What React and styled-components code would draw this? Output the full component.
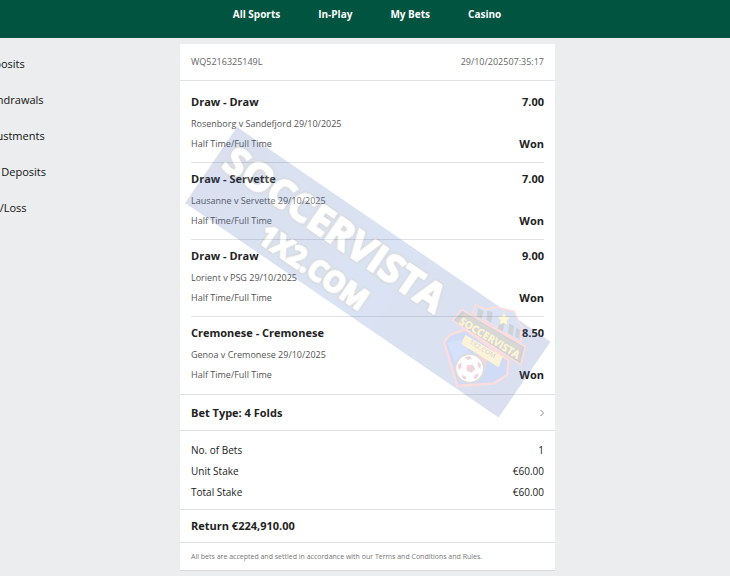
import React from 'react'
import styled, { createGlobalStyle } from 'styled-components'

const navLinks = ['All Sports', 'In-Play', 'My Bets', 'Casino']

const accountLinks = ['Deposits', 'Withdrawals', 'Adjustments', 'Net Deposits', 'Win/Loss']

const legs = [
  { id: 1, pick: 'Draw - Draw', odds: '7.00', fixture: 'Rosenborg v Sandefjord 29/10/2025' },
  { id: 2, pick: 'Draw - Servette', odds: '7.00', fixture: 'Lausanne v Servette 29/10/2025' },
  { id: 3, pick: 'Draw - Draw', odds: '9.00', fixture: 'Lorient v PSG 29/10/2025' },
  { id: 4, pick: 'Cremonese - Cremonese', odds: '8.50', fixture: 'Genoa v Cremonese 29/10/2025' },
]

const stakes = [
  { label: 'No. of Bets', value: '1' },
  { label: 'Unit Stake', value: '€60.00' },
  { label: 'Total Stake', value: '€60.00' },
]

const Watermark = () => (
  <WatermarkSvg viewBox="185 127 366 291" aria-hidden="true">
    <defs>
      <linearGradient id="banner" x1="0" y1="0" x2="1" y2="0">
        <stop offset="0" stopColor="#4a68b0" />
        <stop offset="0.5" stopColor="#4a78c8" />
        <stop offset="1" stopColor="#4a68b0" />
      </linearGradient>
    </defs>
    <g transform="translate(237 127) rotate(34.4)">
      <rect width="380" height="92" fill="url(#banner)" />
      <BannerText x="9" y="43" $size={39}>
        SOCCERVISTA
      </BannerText>
      <BannerText x="80" y="83" $size={28}>
        1X2.COM
      </BannerText>
    </g>
    <g transform="translate(370 240) scale(0.3333)" strokeLinejoin="round">
      <path
        d="M285 268 L240 285 L222 305 L262 438 L372 430 L412 405 L415 360 Z"
        fill="#1c4fd0"
        stroke="#ff5a5a"
        strokeWidth="7"
      />
      <path d="M232 308 L300 290 L290 345 L258 372 Z" fill="#3b6cf0" />
      <path d="M325 325 L355 340 L345 385 L330 380 Z" fill="#e8304a" />
      <path
        d="M308 218 L318 194 L345 208 L378 202 L432 214 L446 246 L458 262 L452 308 Z"
        fill="#4a78d8"
        stroke="#ff5a5a"
        strokeWidth="5"
      />
      <path
        d="M325 204 l16 10 l-6 22 l-14 -8z M352 212 l16 4 l-4 32 l-14 -8z M388 244 l16 6 l-6 24 l-14 -8z M418 250 l14 8 l-4 30 l-14 -8z M438 262 l12 8 l-2 28 l-12 -8z"
        fill="#16223c"
      />
      <path
        d="M276 209 L466 320 L452 374 L248 241 Z"
        fill="#1b2238"
        stroke="#ff5a5a"
        strokeWidth="5"
      />
      <path d="M284 218 L456 322 L446 362 L262 244 Z" fill="#3c3c34" />
      <path d="M286 284 L398 350 L386 382 L274 312 Z" fill="#f5c542" />
      <g transform="translate(268 246) rotate(31.5)">
        <BadgeText x="0" y="4">SOCCERVISTA</BadgeText>
      </g>
      <g transform="translate(297 308) rotate(31)">
        <BadgeSmall x="0" y="2">1X2.COM</BadgeSmall>
      </g>
      <path
        d="M402 214 L408 230 L421 232 L411 242 L414 256 L401 249 L388 254 L391 240 L382 230 L396 229 Z"
        fill="#ffe14d"
        stroke="#8a6a10"
        strokeWidth="2"
      />
      <circle cx="299" cy="385" r="46" fill="#5a5a60" />
      <circle cx="299" cy="385" r="40" fill="#fff" />
      <path
        d="M290 376 L308 374 L316 388 L304 398 L290 392 Z M284 352 L300 348 L306 355 L294 361 Z M324 364 L333 374 L331 386 L323 378 Z M264 372 L274 368 L275 382 L265 390 Z M276 404 L288 410 L288 420 L277 415 Z M314 404 L327 400 L321 414 L311 418 Z"
        fill="#b03a50"
      />
    </g>
  </WatermarkSvg>
)

const App = () => {
  return (
    <>
      <GlobalStyle />
      <TopBar>
        <Nav aria-label="Main">
          {navLinks.map((link) => (
            <NavLink key={link} href="#">
              {link}
            </NavLink>
          ))}
        </Nav>
      </TopBar>
      <Layout>
        <Sidebar aria-label="Account history">
          {accountLinks.map((link) => (
            <SidebarLink key={link} href="#">
              {link}
            </SidebarLink>
          ))}
        </Sidebar>
        <Slip>
          <SlipHeader>
            <span>WQ5216325149L</span>
            <span>29/10/202507:35:17</span>
          </SlipHeader>
          <LegList>
            {legs.map((leg) => (
              <Leg key={leg.id}>
                <LegLine $height={24}>
                  <Strong>{leg.pick}</Strong>
                  <Strong>{leg.odds}</Strong>
                </LegLine>
                <LegLine $height={20}>
                  <Muted>{leg.fixture}</Muted>
                </LegLine>
                <LegLine $height={20}>
                  <Muted>Half Time/Full Time</Muted>
                  <Strong>Won</Strong>
                </LegLine>
              </Leg>
            ))}
          </LegList>
          <BetType type="button">
            Bet Type: 4 Folds
            <Chevron viewBox="0 0 4 8" aria-hidden="true">
              <path d="M0.5 1 L3.5 4 L0.5 7" fill="none" stroke="#888" />
            </Chevron>
          </BetType>
          <Stakes>
            {stakes.map((stake) => (
              <StakeRow key={stake.label}>
                <dt>{stake.label}</dt>
                <dd>{stake.value}</dd>
              </StakeRow>
            ))}
          </Stakes>
          <Return>Return €224,910.00</Return>
          <Terms>
            All bets are accepted and settled in accordance with our Terms and Conditions and Rules.
          </Terms>
          <Watermark />
        </Slip>
      </Layout>
    </>
  )
}

export default App

const GlobalStyle = createGlobalStyle`
  * {
    box-sizing: border-box;
  }
  body {
    margin: 0;
    background: #ebedee;
    color: #222;
    font-family: 'Open Sans', 'Noto Sans', sans-serif;
    font-size: 12px;
    overflow-x: hidden;
  }
`

const TopBar = styled.header`
  background: #005440;
  height: 38px;
  padding-top: 4px;
`

const Nav = styled.nav`
  display: flex;
  justify-content: center;
  gap: 38px;
  padding-left: 4px;
`

const NavLink = styled.a`
  color: #fff;
  font-size: 10px;
  font-weight: 700;
  line-height: 20px;
  text-decoration: none;
`

const Layout = styled.div`
  display: grid;
  grid-template-columns: minmax(180px, 1fr) minmax(0, 375px) minmax(175px, 1fr);
  align-items: start;
  padding: 6px 0;
`

/* the menu runs off the left edge of the window */
const Sidebar = styled.nav`
  display: flex;
  flex-direction: column;
  margin-left: -20px;
  padding-top: 2px;
`

const SidebarLink = styled.a`
  color: #111;
  font-size: 11px;
  line-height: 36px;
  text-decoration: none;
`

const Slip = styled.main`
  position: relative;
  background: #fff;
  border-bottom: 1px solid #d9dbdc;
`

const SlipHeader = styled.div`
  display: flex;
  justify-content: space-between;
  padding: 0 11px;
  border-bottom: 1px solid #dfe1e2;
  color: #666;
  font-size: 9px;
  line-height: 36px;
`

const LegList = styled.ul`
  list-style: none;
  margin: 0;
  padding: 5px 11px 0;
  border-bottom: 1px solid #dfe1e2;
`

const Leg = styled.li`
  height: 77px;
  padding-top: 3px;
  border-bottom: 1px solid #dfe1e2;

  &:last-child {
    border-bottom: 0;
  }
`

const LegLine = styled.div`
  display: flex;
  justify-content: space-between;
  align-items: center;
  height: ${(props) => props.$height}px;
`

const Strong = styled.span`
  font-size: 11px;
  font-weight: 700;
`

const Muted = styled.span`
  color: #555;
  font-size: 9px;
`

const BetType = styled.button`
  display: flex;
  justify-content: space-between;
  align-items: center;
  width: 100%;
  padding: 0 11px;
  border: 0;
  border-bottom: 1px solid #dfe1e2;
  background: none;
  color: inherit;
  font: inherit;
  font-size: 11px;
  font-weight: 700;
  line-height: 35px;
`

const Chevron = styled.svg`
  width: 4px;
  height: 8px;
`

const Stakes = styled.dl`
  margin: 0;
  padding: 9px 11px 6px;
  border-bottom: 1px solid #dfe1e2;
`

const StakeRow = styled.div`
  display: flex;
  justify-content: space-between;
  font-size: 10px;
  line-height: 21px;

  dd {
    margin: 0;
  }
`

const Return = styled.div`
  padding: 0 11px;
  border-bottom: 1px solid #dfe1e2;
  font-size: 11px;
  font-weight: 700;
  line-height: 32px;
`

const Terms = styled.p`
  margin: 0;
  padding: 0 11px;
  color: #777;
  font-size: 7px;
  line-height: 27px;
`

const WatermarkSvg = styled.svg`
  position: absolute;
  top: 83px;
  left: 5px;
  width: 366px;
  opacity: 0.2;
  pointer-events: none;
`

const BannerText = styled.text`
  font-family: 'Open Sans', sans-serif;
  font-size: ${(props) => props.$size}px;
  font-weight: 700;
  fill: #fff;
  stroke: #fff;
  stroke-width: 2px;
  stroke-linejoin: round;
  filter: drop-shadow(0 0 1px #3a342c) drop-shadow(0 0 1px #3a342c);
`

const BadgeText = styled.text`
  font-family: 'Open Sans', sans-serif;
  font-size: 31px;
  font-weight: 700;
  fill: #ffd028;
  stroke: #ffd028;
  stroke-width: 1px;
`

const BadgeSmall = styled.text`
  font-family: 'Open Sans', sans-serif;
  font-size: 20px;
  font-weight: 700;
  fill: #6a5a20;
`
